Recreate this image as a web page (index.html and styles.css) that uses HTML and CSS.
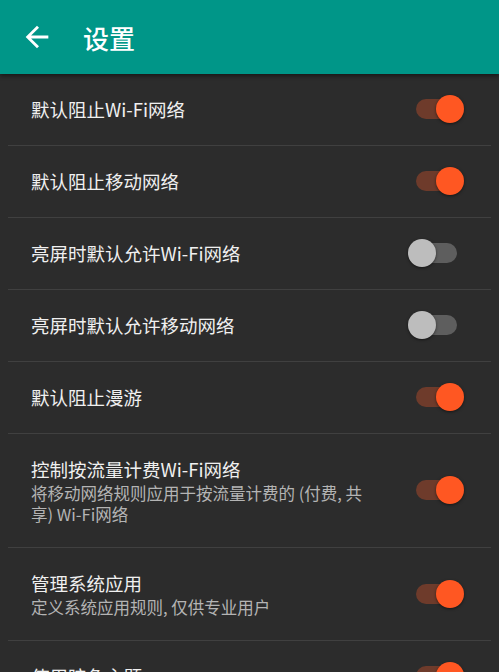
FILE: index.html
```html
<!DOCTYPE html>
<html>
    <head>
        <title>设置</title>
        <link rel="stylesheet" href="styles.css">
    </head>
    <body>
        <div class="toolbar">
            <svg class="back" width="34" height="34" viewBox="0 0 24 24">
                <path d="M20 11H7.83l5.59-5.59L12 4l-8 8 8 8 1.41-1.41L7.83 13H20v-2z" fill="#fff"/>
            </svg>
            <h1>设置</h1>
        </div>

        <div class="list">
            <div class="row">
                <div class="text"><div class="title">默认阻止Wi-Fi网络</div></div>
                <div class="switch on"><span class="track"></span><span class="thumb"></span></div>
            </div>
            <div class="row">
                <div class="text"><div class="title">默认阻止移动网络</div></div>
                <div class="switch on"><span class="track"></span><span class="thumb"></span></div>
            </div>
            <div class="row">
                <div class="text"><div class="title">亮屏时默认允许Wi-Fi网络</div></div>
                <div class="switch"><span class="track"></span><span class="thumb"></span></div>
            </div>
            <div class="row">
                <div class="text"><div class="title">亮屏时默认允许移动网络</div></div>
                <div class="switch"><span class="track"></span><span class="thumb"></span></div>
            </div>
            <div class="row">
                <div class="text"><div class="title">默认阻止漫游</div></div>
                <div class="switch on"><span class="track"></span><span class="thumb"></span></div>
            </div>
            <div class="row">
                <div class="text">
                    <div class="title">控制按流量计费Wi-Fi网络</div>
                    <div class="summary">将移动网络规则应用于按流量计费的 (付费, 共享) Wi-Fi网络</div>
                </div>
                <div class="switch on"><span class="track"></span><span class="thumb"></span></div>
            </div>
            <div class="row">
                <div class="text">
                    <div class="title">管理系统应用</div>
                    <div class="summary">定义系统应用规则, 仅供专业用户</div>
                </div>
                <div class="switch on"><span class="track"></span><span class="thumb"></span></div>
            </div>
            <div class="row">
                <div class="text"><div class="title">使用暗色主题</div></div>
                <div class="switch on"><span class="track"></span><span class="thumb"></span></div>
            </div>
        </div>
    </body>
</html>
```

FILE: styles.css
```css
body {
    margin: 0;
    background-color: #2c2c2c;
    font-family: "Noto Sans CJK SC", sans-serif;
    color: #f0f0f0;
    overflow: hidden;
}
.toolbar {
    height: 74px;
    background-color: #009688;
    display: flex;
    align-items: center;
    padding-left: 20px;
    box-shadow: 0 2px 4px rgba(0, 0, 0, 0.45);
    position: relative;
}
.toolbar h1 {
    margin: 0 0 0 29px;
    font-size: 26px;
    font-weight: 500;
    color: #fff;
}
.back {
    display: block;
}
.row {
    display: flex;
    align-items: center;
    padding: 21px 35px 23px 31px;
    background-image: linear-gradient(#404040, #404040);
    background-size: calc(100% - 16px) 1px;
    background-position: 8px 100%;
    background-repeat: no-repeat;
}
.text {
    flex: 1;
    padding-right: 32px;
}
.title {
    font-size: 18.5px;
    line-height: 28px;
}
.summary {
    font-size: 16.5px;
    line-height: 21px;
    color: #b4b4b4;
}
.switch {
    width: 56px;
    height: 28px;
    position: relative;
    display: flex;
    align-items: center;
    justify-content: flex-start;
}
.switch.on {
    justify-content: flex-end;
}
.track {
    position: absolute;
    left: 8px;
    right: 7px;
    top: 4px;
    height: 20px;
    border-radius: 10px;
    background-color: #5e5e5e;
}
.switch.on .track {
    background-color: #6e3b2b;
}
.thumb {
    width: 28px;
    height: 28px;
    border-radius: 50%;
    background-color: #bdbdbd;
    position: relative;
    box-shadow: 0 1px 3px rgba(0, 0, 0, 0.5);
}
.switch.on .thumb {
    background-color: #ff5722;
}
```
